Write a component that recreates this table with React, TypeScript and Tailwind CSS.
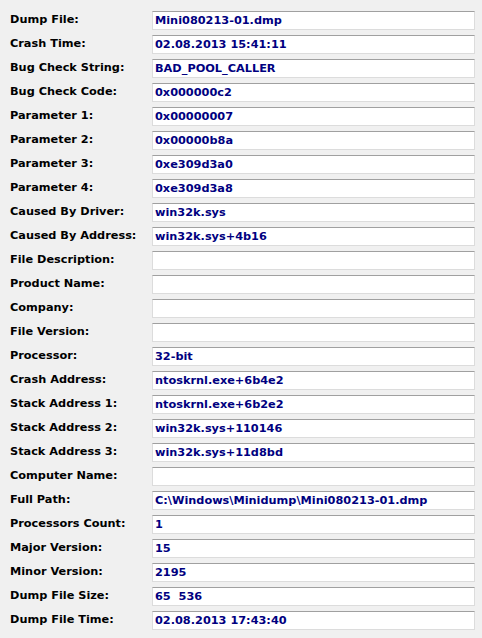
import React from "react";

// dump properties list
const rows: [string, string][] = [
  ["Dump File:", "Mini080213-01.dmp"],
  ["Crash Time:", "02.08.2013 15:41:11"],
  ["Bug Check String:", "BAD_POOL_CALLER"],
  ["Bug Check Code:", "0x000000c2"],
  ["Parameter 1:", "0x00000007"],
  ["Parameter 2:", "0x00000b8a"],
  ["Parameter 3:", "0xe309d3a0"],
  ["Parameter 4:", "0xe309d3a8"],
  ["Caused By Driver:", "win32k.sys"],
  ["Caused By Address:", "win32k.sys+4b16"],
  ["File Description:", ""],
  ["Product Name:", ""],
  ["Company:", ""],
  ["File Version:", ""],
  ["Processor:", "32-bit"],
  ["Crash Address:", "ntoskrnl.exe+6b4e2"],
  ["Stack Address 1:", "ntoskrnl.exe+6b2e2"],
  ["Stack Address 2:", "win32k.sys+110146"],
  ["Stack Address 3:", "win32k.sys+11d8bd"],
  ["Computer Name:", ""],
  ["Full Path:", "C:\\Windows\\Minidump\\Mini080213-01.dmp"],
  ["Processors Count:", "1"],
  ["Major Version:", "15"],
  ["Minor Version:", "2195"],
  ["Dump File Size:", "65  536"],
  ["Dump File Time:", "02.08.2013 17:43:40"],
];

const App = () => {
  return (
    <div
      className="w-[482px] h-[638px] bg-[#f0f0f0] flex flex-col gap-[5px] pt-[11px] text-[11.3px] font-bold"
      style={{ fontFamily: "Tahoma, 'DejaVu Sans', sans-serif" }}
    >
      {rows.map(([label, value]) => (
        <div key={label} className="flex items-center h-[19px]">
          <div className="w-[152px] pl-[10px] text-black whitespace-nowrap">{label}</div>
          <div className="w-[323px] h-[19px] bg-white border border-[#dcdcdc] border-t-[#a0a0a0] pl-[2px] flex items-center text-[#000080] whitespace-pre leading-none">
            {value}
          </div>
        </div>
      ))}
    </div>
  );
};

export default App;
